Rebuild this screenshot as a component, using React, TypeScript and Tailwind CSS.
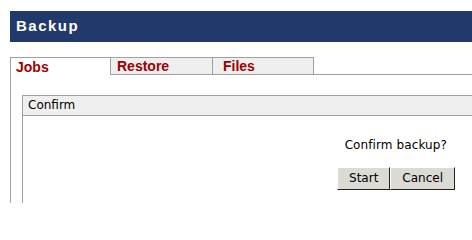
import React, { useState } from 'react';

const tabs = [
  { id: 'jobs', label: 'Jobs', pad: 'pl-[5px]', width: 'w-[100px]' },
  { id: 'restore', label: 'Restore', pad: 'pl-[6px]', width: 'w-[102px]' },
  { id: 'files', label: 'Files', pad: 'pl-[10px]', width: 'w-[102px]' },
];

const App: React.FC = () => {
  const [active, setActive] = useState('jobs');

  return (
    <div className="w-[472px] h-[203px] overflow-hidden bg-white pl-[10px] pt-[11px] flex flex-col">
      {/* Title bar */}
      <div className="h-[31px] bg-[#213a6b] flex items-center pl-[6px]">
        <h1 className="font-['Liberation_Sans',Arial,sans-serif] font-bold text-[15px] tracking-[1.5px] text-white">
          Backup
        </h1>
      </div>

      {/* Tabs */}
      <div className="mt-[15px] flex font-['Liberation_Sans',Arial,sans-serif]">
        {tabs.map((tab, i) => {
          const isActive = tab.id === active;
          return (
            <button
              key={tab.id}
              onClick={() => setActive(tab.id)}
              className={`${tab.width} ${tab.pad} h-[18px] text-left border-t border-l border-[#a0a0a0] text-[14px] leading-[16px] font-bold text-[#a00000] ${
                isActive ? 'bg-white border-b-0 border-b-white' : 'bg-[#efefef] border-b'
              } ${i === tabs.length - 1 ? 'border-r' : ''}`}
            >
              {tab.label}
            </button>
          );
        })}
        <div className="flex-1 border-b border-[#a0a0a0]" />
      </div>

      {/* Tab content */}
      <div className="flex-1 border-l border-[#a0a0a0] pl-[11px] pt-[20px] flex flex-col font-['DejaVu_Sans',sans-serif] text-black">
        <div className="flex-1 border-l border-t border-[#a0a0a0] flex flex-col">
          <div className="h-[20px] bg-[#efefef] border-b border-[#a0a0a0] pl-[5px] text-[12px] leading-[19px]">
            Confirm
          </div>
          <div className="flex flex-col items-end pr-[17px] pt-[22px]">
            <p className="text-[12px] leading-[14px] mr-[8px] tracking-[0.1px]">Confirm backup?</p>
            <div className="mt-[15px] flex">
              <button className="h-[23px] px-[11px] bg-[#dcdad5] border border-t-white border-l-white border-r-[#222] border-b-[#222] text-[12px] leading-[21px]">
                Start
              </button>
              <button className="h-[23px] px-[11px] bg-[#dcdad5] border border-t-white border-l-white border-r-[#222] border-b-[#222] text-[12px] leading-[21px]">
                Cancel
              </button>
            </div>
          </div>
        </div>
      </div>
    </div>
  );
};

export default App;
